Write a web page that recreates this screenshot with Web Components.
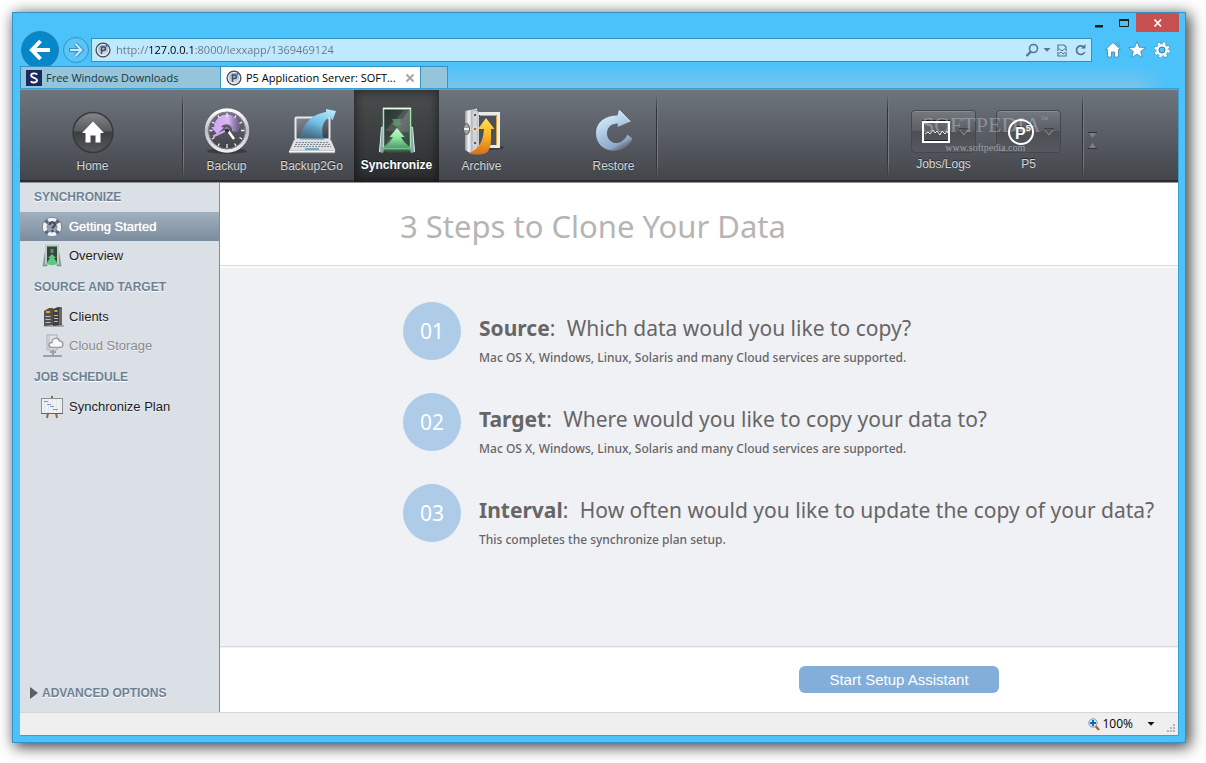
<!DOCTYPE html>
<html lang="en">
<head>
<meta charset="utf-8">
<title>P5 Application Server</title>
<style>
  body {
    margin: 0;
    min-height: 100vh;
    box-sizing: border-box;
    padding: 12px 20px 20px 12px;
    display: flex;
    background: #fff;
    font-family: "Liberation Sans", Arial, sans-serif;
    overflow: hidden;
  }
</style>
</head>
<body>
<browser-window>
  <window-controls slot="chrome"></window-controls>
  <nav-bar slot="chrome" url="http://127.0.0.1:8000/lexxapp/1369469124"></nav-bar>
  <tab-strip slot="chrome">
    <browser-tab>
      <svg slot="icon" width="16" height="16" viewBox="0 0 16 16">
        <rect width="16" height="16" fill="#1b2a5e"/>
        <path d="M11.2 4.6C10.4 3 5.2 2.6 5.2 5.4c0 2.800 5.800 2 5.800 4.900 0 2.800-5.200 2.800-6.200 1" fill="none" stroke="#fff" stroke-width="1.900"/>
      </svg>
      Free Windows Downloads
    </browser-tab>
    <browser-tab active>
      <p5-badge slot="icon"></p5-badge>
      P5 Application Server: SOFT...
    </browser-tab>
  </tab-strip>

  <app-toolbar slot="toolbar">
    <tool-button class="lead trail">
      <svg slot="icon" width="48" height="48" viewBox="0 0 48 48">
        <defs>
          <linearGradient id="home-disc" x2="0" y2="1"><stop offset="0" stop-color="#85888b"/><stop offset=".45" stop-color="#595b5e"/><stop offset=".5" stop-color="#3d3e41"/><stop offset="1" stop-color="#57595c"/></linearGradient>
        </defs>
        <circle cx="24" cy="25.500" r="20" fill="url(#home-disc)" stroke="#37393c" stroke-width="1.500"/>
        <path d="M24 14.500L13 26h3.500v9.500h5v-7h5v7h5V26H35z" fill="#fff"/>
      </svg>
      Home
    </tool-button>
    <tool-divider></tool-divider>
    <tool-button>
      <svg slot="icon" width="48" height="48" viewBox="0 0 48 48">
        <defs>
          <linearGradient id="clock-rim" x2="0" y2="1"><stop offset="0" stop-color="#fff"/><stop offset=".5" stop-color="#b9bcc6"/><stop offset="1" stop-color="#eceef2"/></linearGradient>
          <linearGradient id="clock-face" x2="0" y2="1"><stop offset="0" stop-color="#7d7484"/><stop offset=".5" stop-color="#55565f"/><stop offset="1" stop-color="#3e4047"/></linearGradient>
          <linearGradient id="clock-arrow" x2="1"><stop offset="0" stop-color="#d2a2fb"/><stop offset=".6" stop-color="#d9b8f5"/><stop offset="1" stop-color="#8e6cc0" stop-opacity=".3"/></linearGradient>
        </defs>
        <ellipse cx="24" cy="44" rx="20" ry="3" fill="#2b2d31" opacity=".6"/>
        <circle cx="24" cy="23.500" r="20.500" fill="url(#clock-face)" stroke="url(#clock-rim)" stroke-width="3.500"/>
        <circle cx="24" cy="23.500" r="18.300" fill="none" stroke="#83858f"/>
        <path d="M11 20a13 13 0 0 1 26 1l-3 4-5-1a6 6 0 0 0-11-4l3 .5-7 6.500-6-7z" fill="url(#clock-arrow)"/>
        <path d="M24 6v4M24 37v4M6.500 23.500h3M38 23.500h3.500M15 8.500l1.500 2.500M33 8.500L31.500 11M9 15l2.500 1.500M39 15l-2.500 1.500M9 32l2.500-1.500M39 32l-2.500-1.500M15 39l1.500-2.500M33 39l-1.500-2.500" stroke="#f1f1f6" stroke-width="1.300"/>
        <path d="M10 29.500L26 22" stroke="#d0a9f3" stroke-width="2"/>
        <path d="M23 21l8 11" stroke="#fff" stroke-width="2.500"/>
        <circle cx="24" cy="23.500" r="2.200" fill="#35343b"/>
      </svg>
      Backup
    </tool-button>
    <tool-button>
      <svg slot="icon" width="48" height="48" viewBox="0 0 48 48">
        <defs>
          <linearGradient id="go-arrow" x1=".8" x2=".3" y2="1"><stop offset="0" stop-color="#b5e8fd"/><stop offset=".5" stop-color="#70bfe6"/><stop offset="1" stop-color="#3c7ca6" stop-opacity=".4"/></linearGradient>
          <linearGradient id="go-screen" x2=".6" y2="1"><stop offset="0" stop-color="#8a8d95"/><stop offset="1" stop-color="#3e4852"/></linearGradient>
        </defs>
        <rect x="7.500" y="10.500" width="34" height="22" rx="1" fill="url(#go-screen)" stroke="#e6e8ec" stroke-width="2"/>
        <path d="M12 33C13 18 24 7 38 5V2l10 2-3.500 9.500-2.500-3.500c-7 3-10 11-6 23z" fill="url(#go-arrow)"/>
        <path d="M6 33h37l4.500 10.500h-46z" fill="#dcdfe4"/>
        <path d="M8 35.500h33M7 37.500h35M6 39.500h37" stroke="#868b93" stroke-dasharray="2 1"/>
        <path d="M17 42h14" stroke="#70a9cc" stroke-width="2"/>
        <path d="M1 43.500h46V46H1z" fill="#f6f7f8"/>
        <path d="M1 46h46" stroke="#787b82"/>
      </svg>
      Backup2Go
    </tool-button>
    <tool-button active>
      <svg slot="icon" width="48" height="48" viewBox="0 0 48 48">
        <defs>
          <linearGradient id="sync-board" x2="1" y2="1"><stop offset="0" stop-color="#27322e"/><stop offset=".48" stop-color="#3b4542"/><stop offset=".5" stop-color="#59605f"/><stop offset="1" stop-color="#2e4237"/></linearGradient>
          <linearGradient id="sync-up" x2="0" y2="1"><stop offset="0" stop-color="#c9fbd0"/><stop offset=".4" stop-color="#8ae79f"/><stop offset=".75" stop-color="#5fb377" stop-opacity=".8"/><stop offset="1" stop-color="#4b9c62" stop-opacity="0"/></linearGradient>
        </defs>
        <path d="M9 19L6 45l4 1 2-6V19zM39 19l3 26-4 1-2-6V19z" fill="#8fa2a8"/>
        <path d="M8.500 20L6.500 45M39.500 20l2 25" stroke="#dfe9ee"/>
        <rect x="10.500" y="1.500" width="27" height="40" fill="url(#sync-board)" stroke="#9ce8b4" stroke-width="1.500"/>
        <path d="M10 1.500h28" stroke="#f2fff5" stroke-width="1.500"/>
        <path d="M12 24L31 3h5v22z" fill="#fff" opacity=".12"/>
        <path d="M24 20l-6-4h3l-2-4h10l-2 4h3z" fill="#5c9c74" opacity=".85"/>
        <path d="M24 21l7.500 9H28c2 5 8 9 12 12-5 6-27 6-32 0 4-3 10-7 12-12h-3.500z" fill="url(#sync-up)"/>
      </svg>
      Synchronize
    </tool-button>
    <tool-button class="trail">
      <svg slot="icon" width="48" height="48" viewBox="0 0 48 48">
        <defs>
          <linearGradient id="safe-door" x2="1"><stop offset="0" stop-color="#9b9ea3"/><stop offset=".3" stop-color="#f2f3f4"/><stop offset=".65" stop-color="#b6b9bd"/><stop offset="1" stop-color="#e4e5e7"/></linearGradient>
          <linearGradient id="safe-arrow" x2="0" y2="1"><stop offset="0" stop-color="#ffe257"/><stop offset=".5" stop-color="#fbb124"/><stop offset="1" stop-color="#d3701a"/></linearGradient>
        </defs>
        <ellipse cx="32" cy="40.500" rx="14" ry="2.500" fill="#26282c" opacity=".6"/>
        <rect x="19.500" y="6.500" width="21" height="33" fill="#4c505b" stroke="#e8eaed" stroke-width="3"/>
        <path d="M22 8.500h16.500V38" fill="none" stroke="#d9a438"/>
        <path d="M7 4l12-2.500v42L12 46l-5-3z" fill="url(#safe-door)"/>
        <path d="M14 2.500L20 4v41l-6 1.500z" fill="#d0d2d5" stroke="#8b8e93" stroke-width=".5"/>
        <g fill="#5b5e63" stroke="#f4f4f4"><circle cx="17" cy="8" r="2"/><circle cx="17" cy="22" r="2" fill="#a77726"/><circle cx="17" cy="36" r="2"/></g>
        <ellipse cx="8.500" cy="22" rx="3" ry="5.500" fill="#9fa2a7" stroke="#53565b"/>
        <path d="M6 22h5" stroke="#f2f2f3" stroke-width="2"/>
        <path d="M28 11l8.500 11H33v11c0 7-2 11-5 13-5 2-13 2-17 0 8-3 14-9 15-24h-6z" fill="url(#safe-arrow)"/>
      </svg>
      Archive
    </tool-button>
    <tool-button>
      <svg slot="icon" width="48" height="48" viewBox="0 0 48 48">
        <defs>
          <linearGradient id="restore-ring" x1=".4" x2=".9" y2="1"><stop offset="0" stop-color="#d8f1fd"/><stop offset=".5" stop-color="#a2bddb"/><stop offset=".75" stop-color="#91a9c8"/><stop offset="1" stop-color="#6e7c92" stop-opacity="0"/></linearGradient>
        </defs>
        <path d="M29 3l11.500 11.500L27.500 20l.5-3.500c-7 0-11 4-11 10 0 9 11 13 17 6 2-2 3-3 3-5l5.500 4C36 49 6 48 6 26 6 15 15 8.500 27.500 8.500z" fill="url(#restore-ring)"/>
        <path d="M29.500 3.500l10.500 11" stroke="#f1fbff"/>
      </svg>
      Restore
    </tool-button>
    <tool-divider></tool-divider>
    <tool-divider slot="end"></tool-divider>
    <menu-button slot="end" class="first">
      <svg slot="icon" width="28" height="28" viewBox="0 0 28 28">
        <rect x="1" y="3" width="26" height="20" fill="none" stroke="#1f2022" stroke-width="2"/>
        <rect x="1" y="4" width="26" height="20" fill="none" stroke="#fff" stroke-width="2"/>
        <path d="M3 16l3-2 2 2 3-4 2 3 2-2 3 4 2-4 3 3 2-3 1 2" fill="none" stroke="#e8e8e8"/>
      </svg>
      Jobs/Logs
    </menu-button>
    <menu-button slot="end" class="last">
      <svg slot="icon" width="28" height="28" viewBox="0 0 28 28">
        <circle cx="14" cy="14" r="12" fill="none" stroke="#fff" stroke-width="2"/>
        <text x="8" y="21" font-family="Liberation Sans, sans-serif" font-weight="700" font-size="16" fill="#fff">P<tspan dy="-8" font-size="9">5</tspan></text>
      </svg>
      P5
    </menu-button>
    <tool-divider slot="end"></tool-divider>
  </app-toolbar>

  <side-bar slot="side">
    <side-section heading="SYNCHRONIZE">
      <side-item active>
        <svg slot="icon" width="24" height="24" viewBox="0 0 24 24">
          <circle cx="11" cy="12" r="7.500" fill="none" stroke="#f2f3f6" stroke-width="4.500"/>
          <circle cx="11" cy="12" r="7.500" fill="none" stroke="#5f687c" stroke-width="4.500" stroke-dasharray="3.500 8.280" stroke-dashoffset="-4"/>
          <circle cx="11" cy="12" r="9.700" fill="none" stroke="#7b8593"/>
          <circle cx="11" cy="12" r="5.500" fill="#929cab"/>
          <path d="M8.500 10c0-4 5.500-3.500 5.500-.5 0 2-2.500 2-2.500 4M11.500 15v2" fill="none" stroke="#3d4756" stroke-width="2"/>
        </svg>
        Getting Started
      </side-item>
      <side-item>
        <svg slot="icon" width="24" height="24" viewBox="0 0 24 24">
          <path d="M4 9L2 22h4V9zM18 9l2 13h-4V9z" fill="#8d9da0" stroke="#6c797d" stroke-width=".5"/>
          <rect x="5" y="1.500" width="12" height="18" fill="#36433e" stroke="#b9cfc3" stroke-width="2"/>
          <path d="M11 5v4" stroke="#579271" stroke-width="3"/>
          <path d="M11 10l4 4h-2l4 6c-4 1.500-8 1.500-12 0l4-6H7z" fill="#5cc981"/>
        </svg>
        Overview
      </side-item>
    </side-section>
    <side-section heading="SOURCE AND TARGET">
      <side-item>
        <svg slot="icon" width="24" height="24" viewBox="0 0 24 24">
          <path d="M3 21h20" stroke="#a9adb3" stroke-width="2"/>
          <path d="M3 6l5-3h4v17l-9 1z" fill="#54524f"/>
          <path d="M12 4l5-2 4 .5V20l-9 1z" fill="#3f3f40"/>
          <path d="M18 4.500V20l3-1V3z" fill="#68696a"/>
          <path d="M5 7h4M13.500 6h3" stroke="#f0a224" stroke-width="2"/>
          <path d="M4.500 11.500h5M4.500 14.500h5M4.500 17.500h5M13 10.500h4M13 13.500h4M13 16.500h4" stroke="#bdbdb9"/>
        </svg>
        Clients
      </side-item>
      <side-item disabled>
        <svg slot="icon" width="24" height="24" viewBox="0 0 24 24">
          <path d="M6 1h10v15H6z" fill="#e1e3e8" stroke="#adb0b6"/>
          <path d="M8 1v15" stroke="#b4b7bc"/>
          <path d="M12 16v5M9 18h6M2 22h19" stroke="#9ea1a6" stroke-width="2"/>
          <path d="M11 13.500c-4 0-4-5 0-5 0-5 6.500-5.500 7.500-1.500 4.500 0 4.500 6.500 0 6.500z" fill="#f7f8fa" stroke="#9b9ea4" stroke-width="1.500"/>
        </svg>
        Cloud Storage
      </side-item>
    </side-section>
    <side-section heading="JOB SCHEDULE">
      <side-item>
        <svg slot="icon" width="24" height="24" viewBox="0 0 24 24">
          <path d="M7 18l-1 5M15 18l1 5M11 1v3" stroke="#8e6a35" stroke-width="2"/>
          <rect x=".5" y="3.500" width="21" height="15" fill="#f1f2f4" stroke="#8b9095"/>
          <path d="M3.500 4v14M7.500 4v14M11.500 4v14M15.500 4v14M19.500 4v14" stroke="#e2e5e9"/>
          <path d="M3 6.500h4M6 9.500h4M9 11.500h4M12 14.500h5" stroke="#7d9abb"/>
          <path d="M0 18.500h22" stroke="#5e6367"/>
        </svg>
        Synchronize Plan
      </side-item>
    </side-section>
  </side-bar>

  <setup-guide heading="3 Steps to Clone Your Data" action="Start Setup Assistant">
    <setup-step number="01" name="Source">
      Which data would you like to copy?
      <span slot="note">Mac OS X, Windows, Linux, Solaris and many Cloud services are supported.</span>
    </setup-step>
    <setup-step number="02" name="Target">
      Where would you like to copy your data to?
      <span slot="note">Mac OS X, Windows, Linux, Solaris and many Cloud services are supported.</span>
    </setup-step>
    <setup-step number="03" name="Interval">
      How often would you like to update the copy of your data?
      <span slot="note">This completes the synchronize plan setup.</span>
    </setup-step>
  </setup-guide>

  <status-bar slot="status"></status-bar>
</browser-window>

<script>
// Attaches an open shadow root holding the given markup.
function render(el, html) {
  const template = document.createElement('template');
  template.innerHTML = html;
  el.attachShadow({mode: 'open'}).appendChild(template.content.cloneNode(true));
}

class BrowserWindow extends HTMLElement {
  constructor() {
    super();
    render(this, `
      <style>
        :host {
          flex: 1;
          min-width: 0;
          display: flex;
          flex-direction: column;
          box-sizing: border-box;
          padding: 0 6px 6px 7px;
          border: 1px solid #3592c2;
          background: #4cc2fb;
          box-shadow: 3px 3px 14px 1px rgba(0, 0, 0, .75);
        }
        .client {
          flex: 1;
          display: grid;
          grid-template: auto 1fr auto / 200px minmax(0, 1fr);
          border: 1px solid #3a9fd3;
          border-left-width: 0;
          background: #fff;
        }
        .top, .status { grid-column: 1 / -1; }
        .client > * { min-width: 0; display: grid; }
      </style>
      <slot name="chrome"></slot>
      <div class="client">
        <div class="top"><slot name="toolbar"></slot></div>
        <div><slot name="side"></slot></div>
        <div><slot></slot></div>
        <div class="status"><slot name="status"></slot></div>
      </div>
    `);
  }
}

class WindowControls extends HTMLElement {
  constructor() {
    super();
    render(this, `
      <style>
        :host { display: flex; justify-content: flex-end; height: 19px; }
        button { width: 25px; padding: 0; border: 0; background: none; display: grid; place-items: center; }
        .close { width: 43px; background: #c75050; }
      </style>
      <button aria-label="Minimize"><svg width="10" height="12" viewBox="0 0 10 12"><path d="M1 8h8v2.500H1z" fill="#1b1b1b"/></svg></button>
      <button aria-label="Maximize"><svg width="12" height="12" viewBox="0 0 12 12"><path d="M1.500 2.500h9v7h-9z" fill="none" stroke="#1b1b1b"/><path d="M1 2h10v2H1z" fill="#1b1b1b"/></svg></button>
      <button class="close" aria-label="Close"><svg width="10" height="10" viewBox="0 0 10 10"><path d="M1.500 1.500l6.500 7M8 1.500l-6.500 7" stroke="#fff" stroke-width="1.800"/></svg></button>
    `);
  }
}

class P5Badge extends HTMLElement {
  constructor() {
    super();
    render(this, `
      <style>:host { display: inline-grid; }</style>
      <svg width="16" height="16" viewBox="0 0 16 16">
        <defs><linearGradient id="g" x2="0" y2="1"><stop offset="0" stop-color="#8f9cac"/><stop offset="1" stop-color="#e6ebf1"/></linearGradient></defs>
        <circle cx="8" cy="8" r="6.900" fill="url(#g)" stroke="#454a52" stroke-width="1.300"/>
        <circle cx="8" cy="8" r="5.600" fill="none" stroke="#eef2f6"/>
        <path d="M6.500 12V5h2c2.500 0 2.500 3.500 0 3.500h-2" fill="none" stroke="#39506c" stroke-width="1.500"/>
        <path d="M10.500 4h2" stroke="#2f84d0" stroke-width="2"/>
      </svg>
    `);
  }
}

class NavBar extends HTMLElement {
  constructor() {
    super();
    render(this, `
      <style>
        :host { display: flex; align-items: center; height: 34px; box-sizing: border-box; padding-top: 2px; }
        button { padding: 0; border: 0; background: none; display: grid; place-items: center; }
        .back { width: 40px; }
        .forward { width: 31px; }
        svg { display: block; }
        .address {
          flex: 1;
          min-width: 0;
          display: flex;
          align-items: center;
          gap: 4px;
          height: 24px;
          box-sizing: border-box;
          padding: 0 4px 0 3px;
          border: 1px solid #3a8fb9;
          background: #bfe9fe;
        }
        input {
          flex: 1;
          min-width: 0;
          border: 0;
          padding: 0 0 0 1px;
          outline: 0;
          font: 11px/20px "Open Sans", "Noto Sans", sans-serif;
          color: #66777f;
          /* host part of the url is darker than the rest */
          background: linear-gradient(90deg, #66777f 34px, #000 34px 80px, #66777f 80px);
          -webkit-background-clip: text;
          -webkit-text-fill-color: transparent;
        }
        .address button { width: 14px; }
        .address .drop { width: 8px; }
        .tools { display: flex; gap: 4px; padding: 0 6px 0 11px; }
      </style>
      <button class="back" aria-label="Back">
        <svg width="40" height="38" viewBox="0 0 40 38"><circle cx="20" cy="19" r="18.500" fill="#0687c9" stroke="#2c7fab"/><path d="M20.500 10L12 19l8.500 9M12.500 19H30" fill="none" stroke="#fff" stroke-width="4"/></svg>
      </button>
      <button class="forward" aria-label="Forward">
        <svg width="28" height="28" viewBox="0 0 28 28"><circle cx="14" cy="14" r="12.500" fill="#5cc5f8" stroke="#3592c2"/><path d="M13.500 8l6 6-6 6M7 14h12" fill="none" stroke="#3592c2" stroke-width="4"/><path d="M13.500 8l6 6-6 6M8 14h11" fill="none" stroke="#c6ebfe" stroke-width="2"/></svg>
      </button>
      <div class="address">
        <p5-badge></p5-badge>
        <input type="text" aria-label="Address">
        <button aria-label="Search"><svg width="14" height="14" viewBox="0 0 14 14"><circle cx="8.500" cy="5.500" r="4" fill="none" stroke="#54788a" stroke-width="1.600"/><path d="M6 8.500L1.500 13" stroke="#54788a" stroke-width="2.400"/></svg></button>
        <button class="drop" aria-label="Search options"><svg width="8" height="6" viewBox="0 0 8 6"><path d="M.5 1h7L4 4.800z" fill="#54788a"/></svg></button>
        <button aria-label="Compatibility view"><svg width="12" height="13" viewBox="0 0 12 13"><path d="M2 6V1h6l2 2v3M2 8v4h8V8" fill="none" stroke="#54788a" stroke-width="1.200"/><path d="M1 7l2.500-2L6 7l2.500-2L11 7M3 9.500L5 8l2 2 2-1.500" fill="none" stroke="#54788a"/></svg></button>
        <button aria-label="Refresh"><svg width="13" height="14" viewBox="0 0 13 14"><path d="M10.500 5A4.300 4.300 0 1 0 10.700 9" fill="none" stroke="#54788a" stroke-width="1.700"/><path d="M7 5.500h4.500V1z" fill="#54788a"/></svg></button>
      </div>
      <div class="tools">
        <button aria-label="Home"><svg width="20" height="20" viewBox="0 0 20 20"><path d="M10 2.500l7.500 7h-2V17h-4v-5h-3v5h-4V9.500h-2zM13.500 3h2.500v3z" fill="#fff" stroke="#3a86ad" stroke-width=".8"/></svg></button>
        <button aria-label="Favorites"><svg width="20" height="20" viewBox="0 0 20 20"><path d="M10 1.500l2.300 5.700 6.200.4-4.800 3.900 1.600 6L10 14.200l-5.300 3.300 1.600-6L1.500 7.600l6.200-.4z" fill="#fff" stroke="#3a86ad" stroke-width=".8"/></svg></button>
        <button aria-label="Tools"><svg width="22" height="20" viewBox="0 0 22 20"><g fill="none"><circle cx="11" cy="10" r="6.500" stroke="#3a86ad" stroke-width="3.600" stroke-dasharray="3.300 1.805" stroke-dashoffset=".350"/><circle cx="11" cy="10" r="6.500" stroke="#fff" stroke-width="2.600" stroke-dasharray="2.600 2.505"/><circle cx="11" cy="10" r="4.500" stroke="#fff" stroke-width="2.400"/><circle cx="11" cy="10" r="3" stroke="#3a86ad"/></g></svg></button>
      </div>
    `);
  }

  connectedCallback() {
    this.shadowRoot.querySelector('input').value = this.getAttribute('url');
  }
}

class TabStrip extends HTMLElement {
  constructor() {
    super();
    render(this, `
      <style>
        :host { display: flex; height: 22px; }
        button { width: 27px; padding: 0; border: 1px solid #3592c2; border-width: 1px 1px 0 0; background: #94c5da; }
        .glow { flex: 1; margin-right: 12px; background: linear-gradient(#4cc2fb, #79c4e9); -webkit-mask: linear-gradient(90deg, #000 96%, transparent); }
      </style>
      <slot></slot>
      <button aria-label="New tab"></button>
      <div class="glow"></div>
    `);
  }
}

class BrowserTab extends HTMLElement {
  constructor() {
    super();
    render(this, `
      <style>
        :host {
          width: 200px;
          box-sizing: border-box;
          display: flex;
          align-items: center;
          border: 1px solid #3592c2;
          border-width: 1px 1px 0 0;
          background: #94c5da;
          color: #23333b;
        }
        :host(:first-child) { width: 201px; border-left-width: 1px; }
        :host([active]) { background: #fff; color: #000; }
        button {
          border: 0;
          background: none;
          color: inherit;
          font: 11px/20px "Open Sans", "Noto Sans", sans-serif;
          white-space: nowrap;
        }
        .tab { flex: 1; min-width: 0; display: flex; align-items: center; gap: 4px; padding: 0 5px; }
        .close { display: none; padding: 0 5px; }
        :host([active]) .close { display: grid; }
      </style>
      <button class="tab"><slot name="icon"></slot><span><slot></slot></span></button>
      <button class="close" aria-label="Close tab"><svg width="10" height="10" viewBox="0 0 10 10"><path d="M1.500 1.500l7 7M8.500 1.500l-7 7" stroke="#a6a6a6" stroke-width="2"/></svg></button>
    `);
  }
}

class AppToolbar extends HTMLElement {
  constructor() {
    super();
    render(this, `
      <style>
        :host {
          display: flex;
          height: 94px;
          box-sizing: border-box;
          border-top: 1px solid #8d949b;
          border-bottom: 1px solid #8e9195;
          background: linear-gradient(#6e757d, #5b5f67 45%, #43454a 98%, #2c2d30 98%);
        }
        nav { display: flex; }
        .end { margin-left: auto; position: relative; }
        ::slotted(.lead) { margin-left: 30px; }
        ::slotted(.trail) { margin-right: 47px; }
        ::slotted(.first) { margin-left: 12px; }
        ::slotted(.last) { margin-right: 11px; }
        .scroll { width: 94px; display: flex; flex-direction: column; align-items: flex-start; justify-content: center; gap: 2px; padding-left: 4px; box-sizing: border-box; }
        .scroll button { border: 0; padding: 0; background: none; height: 8px; }
        .mark {
          position: absolute;
          left: 35px;
          top: 20px;
          pointer-events: none;
          text-align: center;
          font-family: "Liberation Serif", "Times New Roman", serif;
          color: rgba(255, 255, 255, .3);
        }
        .mark b { display: block; font-weight: 400; font-size: 22px; line-height: 30px; }
        .mark sup { font-size: 8px; vertical-align: 10px; line-height: 0; }
        .mark small { display: block; font-size: 10px; line-height: 15px; color: rgba(255, 255, 255, .45); }
      </style>
      <nav><slot></slot></nav>
      <nav class="end">
        <slot name="end"></slot>
        <div class="scroll">
          <button aria-label="Next"><svg width="9" height="7" viewBox="0 0 9 7"><path d="M1 1h7L4.500 6z" fill="#7d8085"/><path d="M0 .5h9" stroke="#2f3033"/></svg></button>
          <button aria-label="Previous"><svg width="9" height="7" viewBox="0 0 9 7"><path d="M1 6h7L4.500 1z" fill="#7d8085"/><path d="M0 6.500h9" stroke="#2f3033"/></svg></button>
        </div>
        <div class="mark"><b>SOFTPEDIA<sup>™</sup></b><small>www.softpedia.com</small></div>
      </nav>
    `);
  }
}

class ToolDivider extends HTMLElement {
  constructor() {
    super();
    render(this, `
      <style>
        :host {
          width: 2px;
          margin: 4px 0;
          background: linear-gradient(90deg, #303236 50%, #777b82 50%);
          -webkit-mask: linear-gradient(transparent, #000 20%, #000 80%, transparent);
        }
      </style>
    `);
  }
}

class ToolButton extends HTMLElement {
  constructor() {
    super();
    render(this, `
      <style>
        :host { display: flex; width: 85px; }
        button {
          flex: 1;
          display: flex;
          flex-direction: column;
          align-items: center;
          gap: 4px;
          padding: 17px 0 0;
          border: 0;
          background: none;
          font: 12px/14px "Liberation Sans", Arial, sans-serif;
          color: #d6d7d9;
          text-shadow: 0 -1px 0 rgba(0, 0, 0, .5);
          white-space: nowrap;
        }
        :host([active]) button {
          gap: 3px;
          background: linear-gradient(#4a4d4e, #3b3f3f 50%, #2b2c2d);
          box-shadow: inset 0 0 10px 2px rgba(0, 0, 0, .45);
          color: #fff;
          font-weight: 700;
        }
      </style>
      <button><slot name="icon"></slot><span><slot></slot></span></button>
    `);
  }
}

class MenuButton extends HTMLElement {
  constructor() {
    super();
    render(this, `
      <style>
        :host { width: 85px; display: flex; }
        button {
          flex: 1;
          display: flex;
          flex-direction: column;
          align-items: center;
          gap: 4px;
          padding: 20px 0 0;
          border: 0;
          background: none;
          font: 12px/14px "Liberation Sans", Arial, sans-serif;
          color: #d6d7d9;
          text-shadow: 0 -1px 0 rgba(0, 0, 0, .5);
        }
        .face {
          width: 65px;
          height: 43px;
          box-sizing: border-box;
          padding: 0 6px 0 10px;
          display: flex;
          align-items: center;
          justify-content: space-between;
          border: 1px solid #44474c;
          border-radius: 4px;
          background: linear-gradient(#74797f, #5b5e64 48%, #4c4f54 50%, #55585e);
          box-shadow: inset 0 1px 0 #8a8e94;
        }
      </style>
      <button>
        <span class="face">
          <slot name="icon"></slot>
          <svg width="10" height="8" viewBox="0 0 10 8"><path d="M.5 1.500h9L5 7z" fill="#54575c" stroke="#8e9197"/><path d="M0 1h10" stroke="#222"/></svg>
        </span>
        <span><slot></slot></span>
      </button>
    `);
  }
}

class SideBar extends HTMLElement {
  constructor() {
    super();
    render(this, `
      <style>
        :host {
          display: flex;
          flex-direction: column;
          gap: 3px;
          border-right: 1px solid #86898d;
          background: #dbdfe6;
        }
        button {
          margin-top: auto;
          display: flex;
          align-items: center;
          gap: 4px;
          padding: 0 0 0 10px;
          height: 39px;
          border: 0;
          background: none;
          font: 700 12px/14px "Liberation Sans", Arial, sans-serif;
          color: #6d8193;
          text-shadow: 0 1px 0 #fff;
        }
      </style>
      <slot></slot>
      <button><svg width="8" height="12" viewBox="0 0 8 12"><path d="M0 0l8 6-8 6z" fill="#5c5d60"/></svg>ADVANCED OPTIONS</button>
    `);
  }
}

class SideSection extends HTMLElement {
  constructor() {
    super();
    render(this, `
      <style>
        :host { display: block; }
        h2 {
          margin: 0;
          padding-left: 14px;
          font: 700 12px/29px "Liberation Sans", Arial, sans-serif;
          color: #6d8193;
          text-shadow: 0 1px 0 #fff;
        }
      </style>
      <h2></h2>
      <slot></slot>
    `);
  }

  connectedCallback() {
    this.shadowRoot.querySelector('h2').textContent = this.getAttribute('heading');
  }
}

class SideItem extends HTMLElement {
  constructor() {
    super();
    render(this, `
      <style>
        :host { display: block; }
        a {
          display: flex;
          align-items: center;
          gap: 4px;
          height: 29px;
          padding-left: 21px;
          font: 13px/16px "Liberation Sans", Arial, sans-serif;
          color: #1c1c1c;
          text-decoration: none;
          text-shadow: 0 1px 0 rgba(255, 255, 255, .6);
        }
        :host([active]) a {
          background: linear-gradient(#a1b0bf, #7b8c9d);
          color: #fff;
          text-shadow: 0 0 1px #fff;
        }
        :host([disabled]) a { color: #8b8b8c; }
      </style>
      <a href="#"><slot name="icon"></slot><span><slot></slot></span></a>
    `);
  }
}

class SetupGuide extends HTMLElement {
  constructor() {
    super();
    render(this, `
      <style>
        :host { display: flex; flex-direction: column; min-width: 0; background: #fff; }
        h1 {
          margin: 0;
          padding: 4px 0 0 180px;
          border-bottom: 1px solid #d9dadb;
          font: 31px/78px "Noto Sans", "Open Sans", sans-serif;
          color: #b5b5b5;
          white-space: nowrap;
        }
        .steps {
          flex: 1;
          display: flex;
          flex-direction: column;
          gap: 33px;
          padding: 34px 0 0 183px;
          border-top: 2px solid #fafbfc;
          background: #f0f1f5;
        }
        footer {
          display: flex;
          justify-content: flex-end;
          padding: 19px 179px 19px;
          border-top: 1px solid #d9dadb;
          box-shadow: inset 0 1px 0 #f2f2f2;
        }
        button {
          width: 200px;
          height: 27px;
          padding: 0;
          border: 0;
          border-radius: 6px;
          background: #82aed9;
          color: #fff;
          font: 15px/27px "Liberation Sans", Arial, sans-serif;
        }
      </style>
      <h1></h1>
      <div class="steps"><slot></slot></div>
      <footer><button></button></footer>
    `);
  }

  connectedCallback() {
    this.shadowRoot.querySelector('h1').textContent = this.getAttribute('heading');
    this.shadowRoot.querySelector('button').textContent = this.getAttribute('action');
  }
}

class SetupStep extends HTMLElement {
  constructor() {
    super();
    render(this, `
      <style>
        :host { display: flex; gap: 18px; height: 58px; font-family: "Noto Sans", "Open Sans", sans-serif; color: #666; white-space: nowrap; }
        .number { width: 58px; border-radius: 50%; background: #aecce8; color: #fff; font-size: 21px; line-height: 58px; text-align: center; }
        h3 { margin: 0; padding-top: 10px; font-size: 21px; line-height: 32px; font-weight: 400; }
        h3 span { margin-left: 6px; }
        p { margin: 0; padding-top: 5px; font-size: 12px; line-height: 18px; font-weight: 500; }
      </style>
      <div class="number"></div>
      <div>
        <h3><b></b>:<span><slot></slot></span></h3>
        <p><slot name="note"></slot></p>
      </div>
    `);
  }

  connectedCallback() {
    this.shadowRoot.querySelector('.number').textContent = this.getAttribute('number');
    this.shadowRoot.querySelector('b').textContent = this.getAttribute('name');
  }
}

class StatusBar extends HTMLElement {
  constructor() {
    super();
    render(this, `
      <style>
        :host { display: flex; justify-content: flex-end; height: 23px; box-sizing: border-box; border-top: 1px solid #d5d5d5; background: #efefef; }
        button {
          display: flex;
          align-items: center;
          gap: 2px;
          padding: 0;
          border: 0;
          background: none;
          font: 12px/20px "Open Sans", "Noto Sans", sans-serif;
          color: #000;
        }
        .arrow { margin: 0 12px; }
        .grip { align-self: flex-end; margin: 0 2px 2px 0; }
      </style>
      <button aria-label="Zoom level">
        <svg width="12" height="13" viewBox="0 0 12 13"><path d="M7.500 8l3.500 4" stroke="#a4683c" stroke-width="2.400"/><circle cx="5" cy="5" r="4.200" fill="#d8ecfb" stroke="#8596a4"/><path d="M5 2v6M2 5h6" stroke="#1464b4" stroke-width="2"/></svg>
        <span>100%</span>
        <svg class="arrow" width="8" height="6" viewBox="0 0 8 6"><path d="M.5 1h7L4 4.800z" fill="#111"/></svg>
      </button>
      <svg class="grip" width="9" height="9" viewBox="0 0 9 9"><path d="M6 0h2v2H6zM3 3h2v2H3zM6 3h2v2H6zM0 6h2v2H0zM3 6h2v2H3zM6 6h2v2H6z" fill="#b5b5b5"/></svg>
    `);
  }
}

customElements.define('p5-badge', P5Badge);
customElements.define('browser-window', BrowserWindow);
customElements.define('window-controls', WindowControls);
customElements.define('nav-bar', NavBar);
customElements.define('tab-strip', TabStrip);
customElements.define('browser-tab', BrowserTab);
customElements.define('app-toolbar', AppToolbar);
customElements.define('tool-divider', ToolDivider);
customElements.define('tool-button', ToolButton);
customElements.define('menu-button', MenuButton);
customElements.define('side-bar', SideBar);
customElements.define('side-section', SideSection);
customElements.define('side-item', SideItem);
customElements.define('setup-guide', SetupGuide);
customElements.define('setup-step', SetupStep);
customElements.define('status-bar', StatusBar);
</script>
</body>
</html>
